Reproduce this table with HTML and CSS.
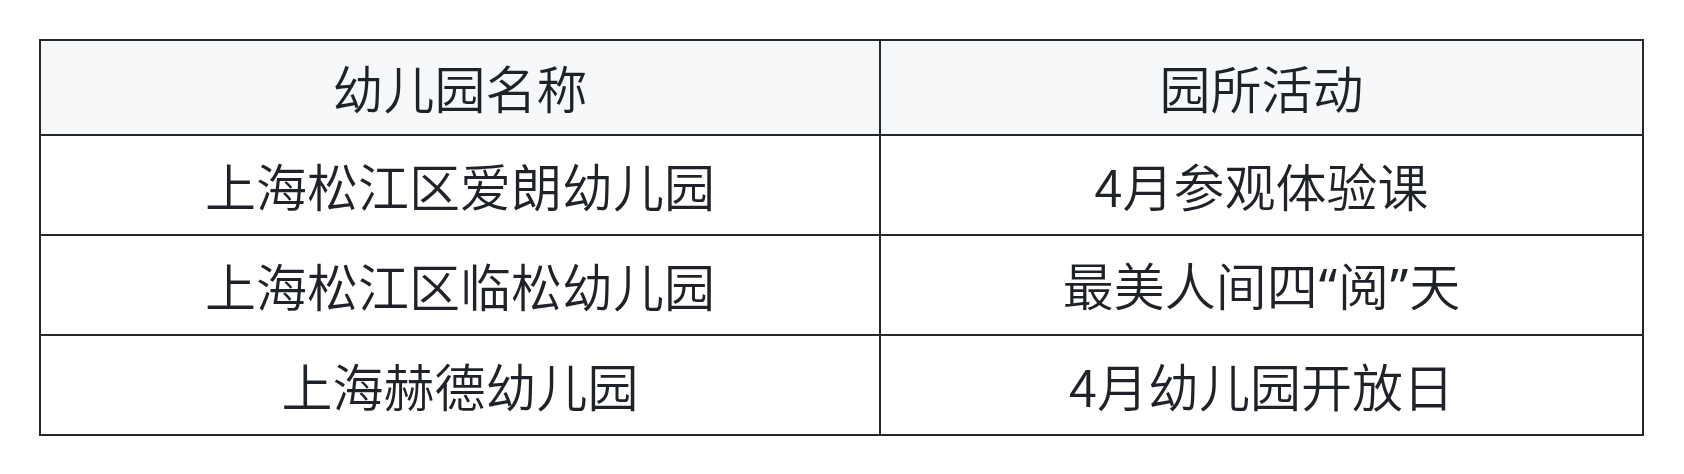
FILE: index.html
```html
<!DOCTYPE html>
<html lang="zh-CN">
<head>
<meta charset="utf-8">
<link rel="stylesheet" href="styles.css">
</head>
<body>
<table class="kg-table">
  <thead>
    <tr class="head-row"><th class="col-name">幼儿园名称</th><th>园所活动</th></tr>
  </thead>
  <tbody>
    <tr class="body-row"><td>上海松江区爱朗幼儿园</td><td>4月参观体验课</td></tr>
    <tr class="body-row"><td>上海松江区临松幼儿园</td><td>最美人间四<span class="q">“</span>阅<span class="q">”</span>天</td></tr>
    <tr class="body-row last-row"><td>上海赫德幼儿园</td><td>4月幼儿园开放日</td></tr>
  </tbody>
</table>
</body>
</html>
```
FILE: styles.css
```css
html, body {
  margin: 0;
  padding: 0;
  background: #ffffff;
}
body {
  padding: 39px 0 0 39px;
  font-family: "Noto Sans CJK SC", "Noto Sans", sans-serif;
  color: #1f2329;
}
.kg-table {
  border-collapse: collapse;
  width: 1605px;
  table-layout: fixed;
}
.kg-table th,
.kg-table td {
  border: 2px solid #24272c;
  padding: 0;
  text-align: center;
  vertical-align: middle;
  font-size: 51px;
  font-weight: 350;
  line-height: 1;
}
.kg-table th {
  background: #f7f8fa;
}
.col-name {
  width: 838px;
}
.head-row {
  height: 95px;
}
.body-row {
  height: 100px;
}
.q {
  font-family: "Noto Sans", sans-serif;
  font-weight: 400;
  padding: 0 1px;
}
```
